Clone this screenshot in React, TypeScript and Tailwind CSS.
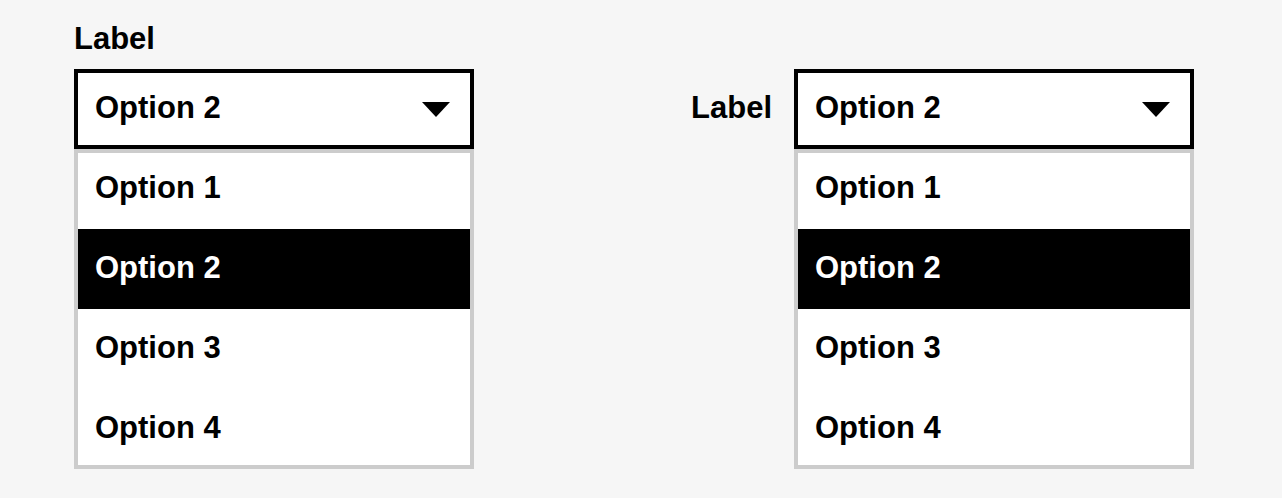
import React from "react";

const options = ["Option 1", "Option 2", "Option 3", "Option 4"];

function Arrow() {
  return (
    <svg width="28" height="15" viewBox="0 0 28 15" className="block">
      <polygon points="0,0 28,0 14,15" fill="#000" />
    </svg>
  );
}

function Dropdown() {
  return (
    <div className="w-[400px]">
      <div className="flex h-[80px] items-center justify-between border-4 border-black bg-white pl-[17px] pr-[20px]">
        <span className="pb-[1px]">Option 2</span>
        <Arrow />
      </div>
      <div className="bg-white outline-4 -outline-offset-4 outline-[#cccccc]">
        {options.map((o) => (
          <div
            key={o}
            className={
              o === "Option 2"
                ? "flex h-[80px] items-center bg-black pb-[1px] pl-[21px] text-white"
                : "flex h-[80px] items-center pb-[1px] pl-[21px] text-black"
            }
          >
            {o}
          </div>
        ))}
      </div>
    </div>
  );
}

export default function App() {
  return (
    <div
      className="flex h-[498px] w-[1282px] justify-between bg-[#f6f6f6] pl-[74px] pr-[88px] pt-[21px] text-[31px] font-bold text-black"
      style={{ fontFamily: '"Liberation Sans", Arial, Helvetica, sans-serif' }}
    >
      <div>
        <div className="mb-[12px] h-[36px] leading-[36px]">Label</div>
        <Dropdown />
      </div>
      <div className="mt-[48px] flex items-start gap-[22px]">
        <div className="flex h-[80px] items-center pb-[1px]">Label</div>
        <Dropdown />
      </div>
    </div>
  );
}
